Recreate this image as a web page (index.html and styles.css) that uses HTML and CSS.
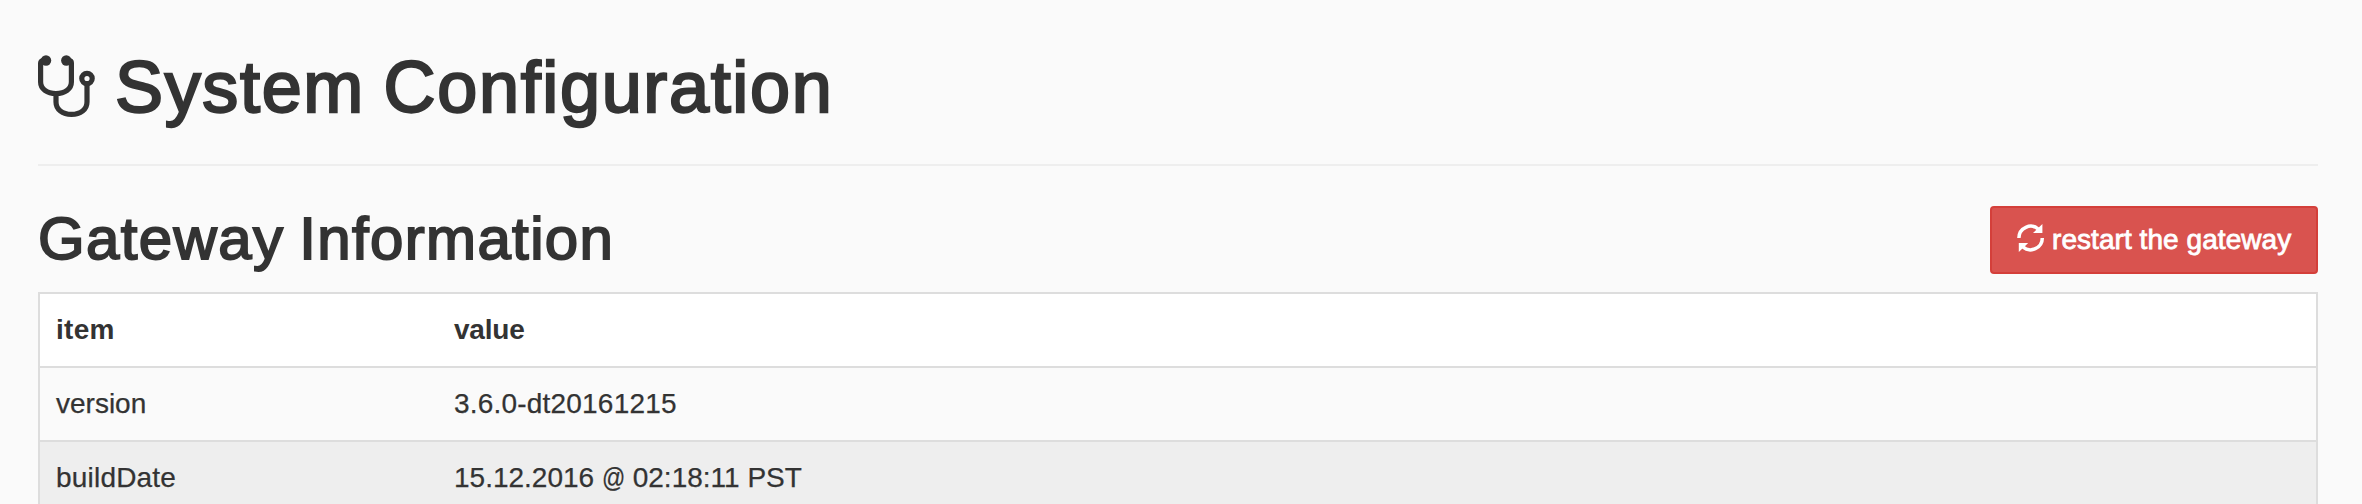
FILE: index.html
```html
<!DOCTYPE html>
<html lang="en">
<head>
<meta charset="utf-8">
<title>System Configuration</title>
<link rel="stylesheet" href="styles.css">
</head>
<body>
<main class="container">
  <header class="page-header">
    <svg class="icon-stethoscope" viewBox="0 0 58 64" fill="none" stroke="currentColor" stroke-width="5.2">
      <path d="M8 5.500H5.500Q2.600 5.500 2.600 8V27C2.600 34 9 38.500 18 38.500S33.400 34 33.400 27V8Q33.400 5.500 30.500 5.500H28"/>
      <path d="M18 38V47C18 54.500 24.500 59.400 33.500 59.400S49 54.500 49 47V29"/>
      <circle cx="49" cy="23.500" r="5.200"/>
      <g fill="currentColor" stroke="none"><circle cx="8" cy="5.500" r="5.200"/><circle cx="28.300" cy="5.500" r="5.200"/></g>
    </svg>
    <h1 class="page-title">System Configuration</h1>
  </header>
  <section>
    <div class="section-head">
      <h2 class="section-title">Gateway Information</h2>
      <button class="btn-danger" type="button">
        <svg class="icon-refresh" viewBox="0 0 28 28">
          <g fill="none" stroke="currentColor" stroke-width="3.500">
            <path d="M1.900 14A11.800 11.800 0 0 1 21.500 5.200"/>
            <path d="M25.300 14A11.800 11.800 0 0 1 5.700 22.800"/>
          </g>
          <path fill="currentColor" d="M25.400 0V9H16zM1.800 28V19H11.200z"/>
        </svg>
        <span class="btn-label">restart the gateway</span>
      </button>
    </div>
    <table class="info-table">
      <thead>
        <tr><th class="col-item">item</th><th>value</th></tr>
      </thead>
      <tbody>
        <tr><td>version</td><td class="version">3.6.0-dt20161215</td></tr>
        <tr class="shaded"><td class="build">buildDate</td><td class="date">15.12.2016 <span class="at">@</span> 02:18:11 PST</td></tr>
      </tbody>
    </table>
  </section>
</main>
</body>
</html>
```
FILE: styles.css
```css
* { box-sizing: border-box; }
html { overflow: hidden; }
body {
  margin: 0;
  height: 504px;
  overflow: hidden;
  background: #fafafa;
  color: #333;
  font: 28px/40px "Liberation Sans", Arial, sans-serif;
}
.container { padding: 0 44px 0 38px; }
.page-header {
  display: flex;
  align-items: flex-start;
  height: 166px;
  padding-top: 47px;
  border-bottom: 2px solid #eee;
}
.icon-stethoscope { width: 58px; height: 64px; margin-top: 8px; flex: none; }
.page-title {
  margin: 0 0 0 19px;
  font-size: 72px;
  line-height: 80px;
  font-weight: 400;
  letter-spacing: 1.65px;
  word-spacing: -3px;
  -webkit-text-stroke: 2.3px #333;
}
.section-head {
  display: flex;
  justify-content: space-between;
  height: 126px;
  padding-top: 40px;
}
.section-title {
  margin: 0;
  font-size: 60px;
  line-height: 66px;
  font-weight: 400;
  letter-spacing: 1.35px;
  word-spacing: -3px;
  -webkit-text-stroke: 1.9px #333;
}
.btn-danger {
  display: flex;
  align-items: flex-start;
  width: 328px;
  height: 68px;
  padding: 12px 0 0 25px;
  border: 2px solid #d43f3a;
  border-radius: 4px;
  background: #d9534f;
  color: #fff;
  font: 28px/40px "Liberation Sans", Arial, sans-serif;
  white-space: nowrap;
}
.icon-refresh { width: 28px; height: 28px; margin-top: 4px; flex: none; }
.btn-label { margin-left: 7px; letter-spacing: 0.06px; -webkit-text-stroke: 0.8px #fff; }
.info-table {
  width: 100%;
  table-layout: fixed;
  border-collapse: separate;
  border-spacing: 0;
  border: 2px solid #ddd;
  background: #fafafa;
}
.info-table th, .info-table td {
  height: 74px;
  padding: 16px;
  border-bottom: 2px solid #ddd;
  text-align: left;
  line-height: 40px;
}
.info-table td { -webkit-text-stroke: 0.25px #333; }
.info-table th { background: #fff; letter-spacing: -0.2px; }
.info-table .col-item { width: 398px; letter-spacing: 0.3px; }
.shaded { background: #eee; }
.version { letter-spacing: 0.2px; }
.build { letter-spacing: 0.2px; }
.date { letter-spacing: 0; }
.at { display: inline-block; width: 23px; transform: scaleX(0.82); transform-origin: left; }
```
